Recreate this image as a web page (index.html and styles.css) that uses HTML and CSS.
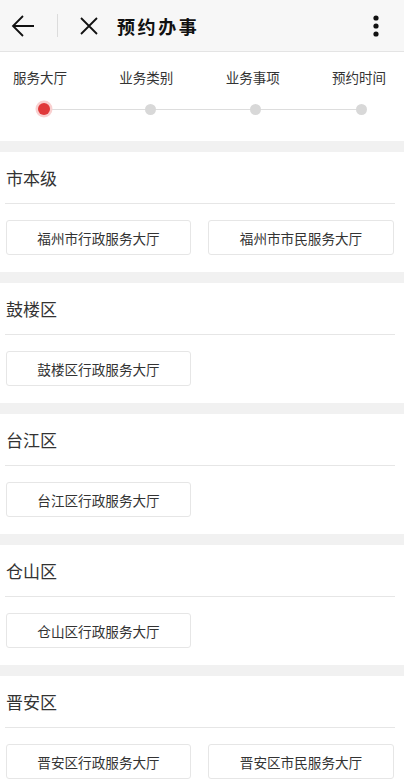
FILE: index.html
```html
<!DOCTYPE html>
<html lang="zh-CN">
<head>
<meta charset="utf-8">
<title>预约办事</title>
<link rel="stylesheet" href="styles.css">
</head>
<body>
<header class="topbar">
  <div class="icon back">
    <svg width="24" height="24" viewBox="0 0 24 24"><path d="M23 12H2M12 2L2 12l10 10" fill="none" stroke="#111" stroke-width="1.8"/></svg>
  </div>
  <span class="sep"></span>
  <div class="icon close">
    <svg width="18" height="18" viewBox="0 0 18 18"><path d="M1 1l16 16M17 1L1 17" fill="none" stroke="#111" stroke-width="1.8"/></svg>
  </div>
  <h1 class="title">预约办事</h1>
  <div class="more">
    <svg width="6" height="22" viewBox="0 0 6 22"><circle cx="3" cy="3" r="2.6" fill="#111"/><circle cx="3" cy="11" r="2.6" fill="#111"/><circle cx="3" cy="19" r="2.6" fill="#111"/></svg>
  </div>
</header>

<section class="steps">
  <div class="step-labels">
    <span>服务大厅</span>
    <span>业务类别</span>
    <span>业务事项</span>
    <span>预约时间</span>
  </div>
  <div class="step-dots">
    <span class="track"></span>
    <span class="dot active"></span>
    <span class="dot"></span>
    <span class="dot"></span>
    <span class="dot"></span>
  </div>
</section>

<section class="area">
  <h2 class="area-title">市本级</h2>
  <div class="halls">
    <div class="hall">福州市行政服务大厅</div>
    <div class="hall">福州市市民服务大厅</div>
  </div>
</section>

<section class="area">
  <h2 class="area-title">鼓楼区</h2>
  <div class="halls">
    <div class="hall">鼓楼区行政服务大厅</div>
  </div>
</section>

<section class="area">
  <h2 class="area-title">台江区</h2>
  <div class="halls">
    <div class="hall">台江区行政服务大厅</div>
  </div>
</section>

<section class="area">
  <h2 class="area-title">仓山区</h2>
  <div class="halls">
    <div class="hall">仓山区行政服务大厅</div>
  </div>
</section>

<section class="area">
  <h2 class="area-title">晋安区</h2>
  <div class="halls">
    <div class="hall">晋安区行政服务大厅</div>
    <div class="hall">晋安区市民服务大厅</div>
  </div>
</section>
</body>
</html>
```

FILE: styles.css
```css
* { box-sizing: border-box; }
html, body { margin: 0; padding: 0; }
body {
  background: #f1f1f1;
  font-family: "Noto Sans CJK SC", "Noto Sans", sans-serif;
  color: #333;
  width: 404px;
  overflow: hidden;
}

.topbar {
  height: 52px;
  background: #f7f7f7;
  border-bottom: 1px solid #e4e4e4;
  display: flex;
  align-items: center;
  padding-left: 11px;
}
.icon { display: flex; align-items: center; }
.icon svg { display: block; }
.back { width: 24px; }
.sep {
  width: 1px;
  height: 23px;
  background: #dcdcdc;
  margin-left: 22px;
  margin-right: 22px;
}
.close { width: 18px; }
.title {
  margin: 0 0 0 19px;
  font-size: 18px;
  font-weight: 700;
  letter-spacing: 2.6px;
  color: #111;
  line-height: 1;
}
.more { margin-left: auto; margin-right: 25px; display: flex; }
.more svg { display: block; }

.steps {
  background: #fff;
  height: 89px;
  margin-bottom: 11px;
  padding-top: 15px;
}
.step-labels {
  display: flex;
  justify-content: space-between;
  padding: 0 18px 0 13px;
  font-size: 13.5px;
  line-height: 20px;
  color: #333;
}
.step-dots {
  position: relative;
  display: flex;
  justify-content: space-between;
  align-items: center;
  padding: 0 37px 0 38px;
  margin-top: 12px;
  height: 20px;
}
.track {
  position: absolute;
  left: 44px;
  right: 43px;
  top: 10px;
  height: 1px;
  background: #dddddd;
}
.dot {
  position: relative;
  width: 11px;
  height: 11px;
  border-radius: 50%;
  background: #d8d8d8;
}
.dot.active {
  width: 12px;
  height: 12px;
  background: #e0393a;
  box-shadow: 0 0 0 2.5px #f9d0d0;
}

.area {
  background: #fff;
  height: 120px;
  margin-bottom: 11px;
}
.area-title {
  margin: 0 9px 0 5px;
  height: 52px;
  line-height: 51px;
  border-bottom: 1px solid #e6e6e6;
  font-size: 17px;
  font-weight: 400;
  color: #333;
  padding-left: 1px;
}
.halls {
  display: grid;
  grid-template-columns: 185px 186px;
  column-gap: 17px;
  padding: 16px 11px 0 6px;
}
.hall {
  height: 35px;
  border: 1px solid #e6e6e6;
  border-radius: 3px;
  display: flex;
  align-items: center;
  justify-content: center;
  font-size: 13.6px;
  color: #333;
  background: #fff;
}
```
